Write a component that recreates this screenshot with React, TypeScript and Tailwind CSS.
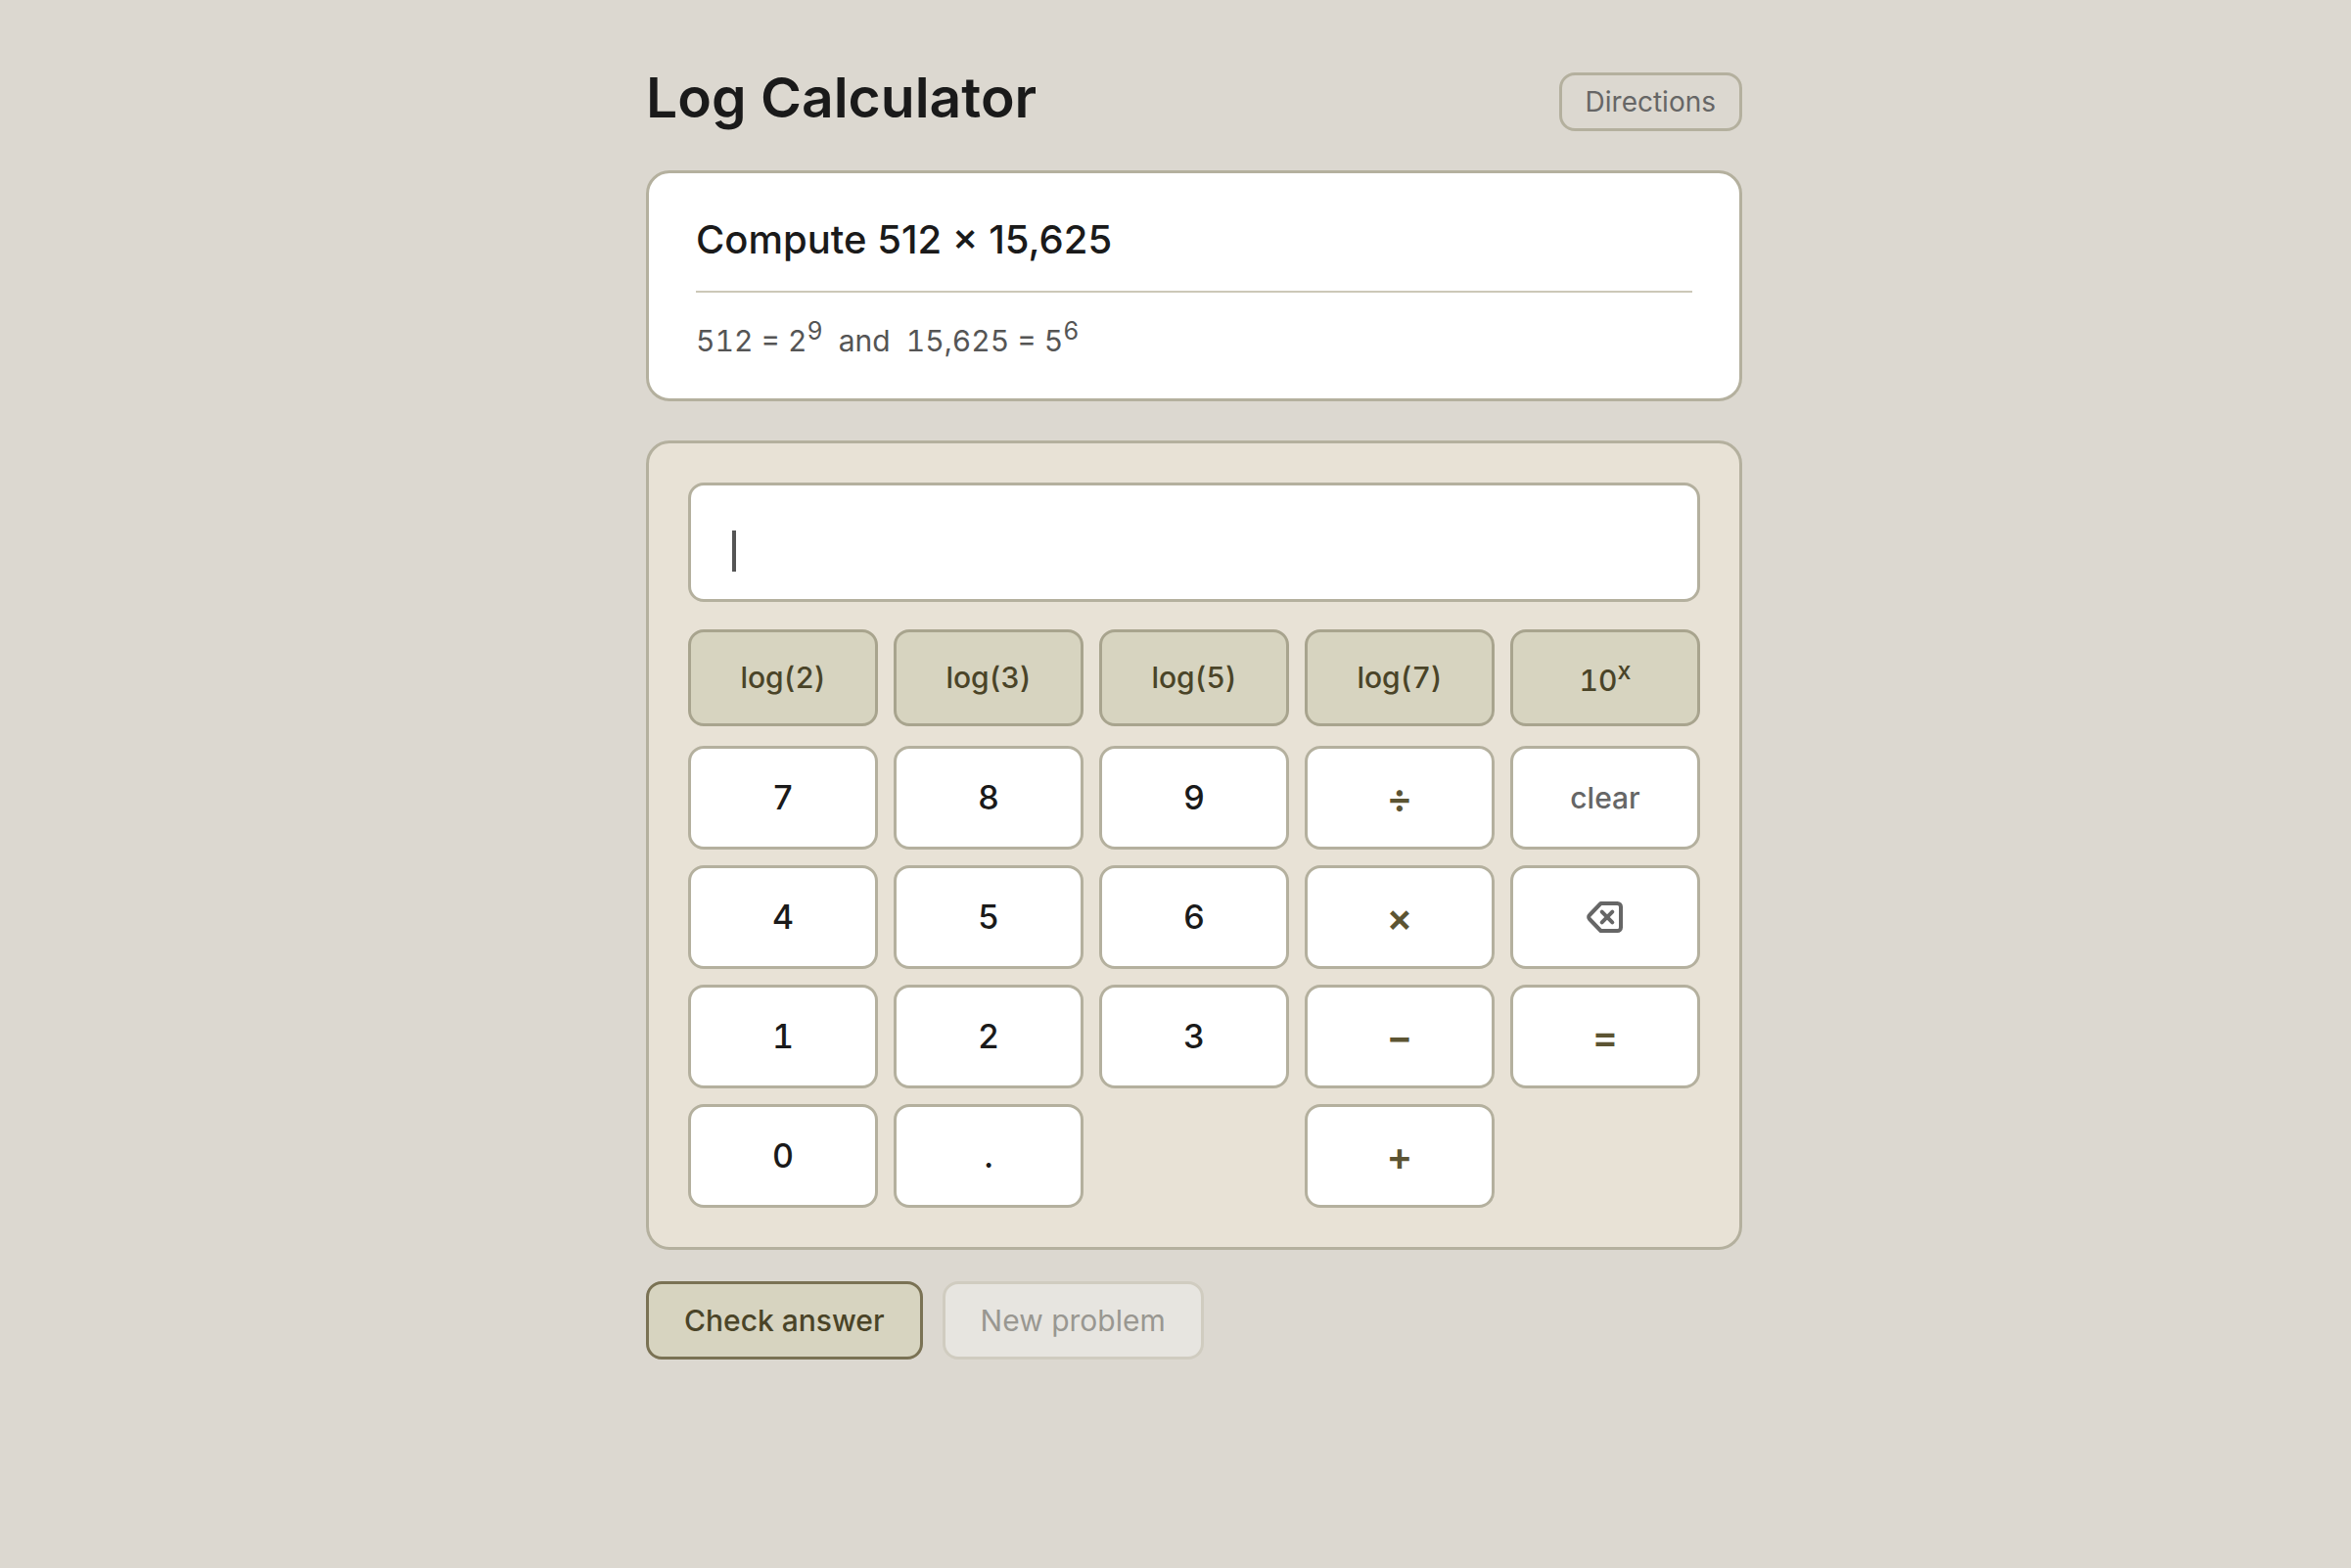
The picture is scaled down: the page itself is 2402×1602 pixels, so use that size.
import { useState } from 'react'

type KeyKind = 'digit' | 'op' | 'clear' | 'back' | 'equals'

interface CalcKey {
  label: string
  kind: KeyKind
}

const logKeys = ['log(2)', 'log(3)', 'log(5)', 'log(7)']

// null leaves an empty cell in the grid
const keys: (CalcKey | null)[] = [
  { label: '7', kind: 'digit' },
  { label: '8', kind: 'digit' },
  { label: '9', kind: 'digit' },
  { label: '÷', kind: 'op' },
  { label: 'clear', kind: 'clear' },
  { label: '4', kind: 'digit' },
  { label: '5', kind: 'digit' },
  { label: '6', kind: 'digit' },
  { label: '×', kind: 'op' },
  { label: 'backspace', kind: 'back' },
  { label: '1', kind: 'digit' },
  { label: '2', kind: 'digit' },
  { label: '3', kind: 'digit' },
  { label: '−', kind: 'op' },
  { label: '=', kind: 'equals' },
  { label: '0', kind: 'digit' },
  { label: '.', kind: 'digit' },
  null,
  { label: '+', kind: 'op' },
  null,
]

const keyStyles: Record<KeyKind, string> = {
  digit: 'pb-0.5 text-[34px] font-medium text-[#1a1a1a]',
  op: 'pt-0.5 text-[40px] font-semibold text-[#5c5433]',
  equals: 'pt-0.5 text-[40px] font-semibold text-[#5c5433]',
  clear: 'text-[30px] font-medium text-[#666666]',
  back: 'text-[#666666]',
}

function BackspaceIcon() {
  return (
    <svg width="38" height="32" viewBox="0 0 38 32" fill="none" stroke="currentColor" strokeWidth="4" strokeLinecap="round" strokeLinejoin="round" aria-hidden="true">
      <path d="M14.5 2H31.5a3.5 3.5 0 0 1 3.5 3.5V26.5a3.5 3.5 0 0 1-3.5 3.5H14.5L3 18a2.8 2.8 0 0 1 0-4Z" />
      <path d="M15.7 10.7l10.6 10.6M26.3 10.7l-10.6 10.6" />
    </svg>
  )
}

export default function App() {
  const [tokens, setTokens] = useState<string[]>([])

  const press = (key: CalcKey) => {
    if (key.kind === 'clear') setTokens([])
    else if (key.kind === 'back') setTokens(tokens.slice(0, -1))
    else if (key.kind !== 'equals') setTokens([...tokens, key.label])
  }

  return (
    <div className="min-h-screen bg-[#dcd8d0] pt-[66px] pb-16 pl-[38px] font-['Inter',sans-serif] text-[#1a1a1a]">
      <main className="mx-auto w-full max-w-[1120px]">
        <header className="mb-10 flex items-end justify-between">
          <h1 className="text-[57px] leading-[68px] font-semibold">Log Calculator</h1>
          <button type="button" className="h-[60px] rounded-2xl border-3 border-[#b4b09e] px-6 text-[28px] leading-[34px] text-[#666666]">
            Directions
          </button>
        </header>

        <section className="mb-10 rounded-3xl border-3 border-[#b4b09e] bg-white px-12 pt-[42px] pb-[34px]">
          <h2 className="border-b-2 border-[#ccc8b8] pb-[26px] text-[40px] leading-[52px] font-medium">
            Compute 512 × 15,625
          </h2>
          <p className="mt-6 text-[30px] leading-[50px] whitespace-pre text-[#555555] tabular-nums">
            512 = 2<sup className="text-[25px]">9</sup>{'  and  '}15,625 = 5<sup className="text-[25px]">6</sup>
          </p>
        </section>

        <section className="rounded-3xl border-3 border-[#b4b09e] bg-[#e8e2d6] p-10">
          <output aria-label="Expression" className="mb-7 flex h-[122px] items-center rounded-2xl border-3 border-[#b4b09e] bg-white px-10 pt-[18px] text-[40px] tabular-nums">
            {tokens.join('')}
            <span className="ml-0.5 h-[42px] w-1 bg-[#555555]" />
          </output>

          <div className="mb-5 grid grid-cols-5 gap-4">
            {logKeys.map(label => (
              <button
                key={label}
                type="button"
                onClick={() => setTokens([...tokens, label])}
                className="h-[99px] rounded-2xl border-3 border-[#a8a48e] bg-[#d7d4c0] text-[30px] font-medium text-[#4a4428] tabular-nums"
              >
                {label}
              </button>
            ))}
            <button
              type="button"
              onClick={() => setTokens([...tokens, '10^'])}
              className="h-[99px] rounded-2xl border-3 border-[#a8a48e] bg-[#d7d4c0] pt-1.5 text-[30px] font-medium text-[#4a4428] tabular-nums"
            >
              10<sup className="text-[25px]">x</sup>
            </button>
          </div>

          <div className="grid grid-cols-5 gap-4">
            {keys.map((key, i) =>
              key ? (
                <button
                  key={key.label}
                  type="button"
                  aria-label={key.label}
                  onClick={() => press(key)}
                  className={`flex h-[106px] items-center justify-center rounded-2xl border-3 border-[#b4b09e] bg-white tabular-nums ${keyStyles[key.kind]}`}
                >
                  {key.kind === 'back' ? <BackspaceIcon /> : key.label}
                </button>
              ) : (
                <div key={i} />
              )
            )}
          </div>
        </section>

        <div className="mt-8 flex gap-5">
          <button type="button" className="h-20 rounded-2xl border-3 border-[#7a7254] bg-[#d7d4c0] px-9 text-[30px] font-medium text-[#4a4428]">
            Check answer
          </button>
          <button type="button" disabled className="h-20 rounded-2xl border-3 border-[#d0ccc0] bg-[#e7e5e0] px-9 text-[30px] text-[#999791]">
            New problem
          </button>
        </div>
      </main>
    </div>
  )
}
